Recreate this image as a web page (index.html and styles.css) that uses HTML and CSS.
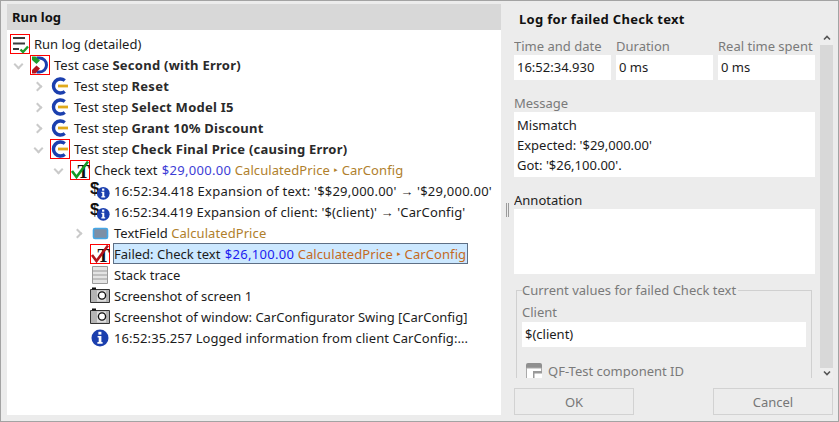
FILE: index.html
```html
<!DOCTYPE html>
<html lang="en">
<head>
<meta charset="utf-8">
<title>Run log</title>
<link rel="stylesheet" href="styles.css">
</head>
<body>
<svg class="defs" width="0" height="0" aria-hidden="true">
  <symbol id="i-step" viewBox="0 0 20 20">
    <path d="M14.800 4.500A7 7 0 1 0 14.800 15.500" fill="none" stroke="#1b3fae" stroke-width="3.400"/>
    <path d="M8 10h10" stroke="#e0aa1c" stroke-width="2.800"/>
  </symbol>
  <symbol id="i-info" viewBox="0 0 18 18">
    <circle cx="9" cy="9" r="8.500" fill="#1b3fae"/>
    <rect x="7.400" y="2.800" width="3" height="2.800" fill="#fff"/>
    <path d="M6.600 7h3.800v6h1.200v1.800H6.400V13h1.300V8.600H6.600z" fill="#fff"/>
  </symbol>
  <symbol id="i-cam" viewBox="0 0 20 20">
    <path d="M.5 3.500h19v13H.5z" fill="#b4b4b4" stroke="#333"/>
    <path d="M2 1.500h4v2H2z" fill="#111"/>
    <path d="M7 4.500h9v11H7z" fill="#ddd"/>
    <circle cx="12" cy="9.500" r="3.600" fill="#fff" stroke="#111" stroke-width="1.400"/>
  </symbol>
</svg>
<div class="window">
  <div class="main">
    <section class="left">
      <h2 class="left-head">Run log</h2>
      <div class="tree">
        <div class="row">
          <span class="icon mark"><svg width="18" height="18" viewBox="0 0 18 18"><path d="M2 3h12M2 8.500h12M2 14h6" stroke="#3b3b3b" stroke-width="2.200"/><path d="M9.500 14.500l2.500 2.500 5-5.500" fill="none" stroke="#1f9b2c" stroke-width="2.400"/></svg></span>
          <span class="label">Run log (detailed)</span>
        </div>
        <div class="row lv1">
          <span class="tw open"></span>
          <span class="icon mark"><svg width="18" height="18" viewBox="0 0 18 18"><path d="M5.500 2h3a7 7 0 0 1 0 14h-3" fill="none" stroke="#1b3fae" stroke-width="3"/><path d="M1 .5h3.500l4.500 4-3.500 3.500L1 4z" fill="#1f9b2c"/><path d="M1 17.500V14l4.500-4.500L9 12.500l-4.500 5z" fill="#b3141d"/></svg></span>
          <span class="label">Test case <b>Second (with Error)</b></span>
        </div>
        <div class="row lv2">
          <span class="tw"></span>
          <span class="icon"><svg width="20" height="20"><use href="#i-step"/></svg></span>
          <span class="label">Test step <b>Reset</b></span>
        </div>
        <div class="row lv2">
          <span class="tw"></span>
          <span class="icon"><svg width="20" height="20"><use href="#i-step"/></svg></span>
          <span class="label">Test step <b>Select Model I5</b></span>
        </div>
        <div class="row lv2">
          <span class="tw"></span>
          <span class="icon"><svg width="20" height="20"><use href="#i-step"/></svg></span>
          <span class="label">Test step <b>Grant 10% Discount</b></span>
        </div>
        <div class="row lv2">
          <span class="tw open"></span>
          <span class="icon mark"><svg width="18" height="18" viewBox="1 1 18 18"><use href="#i-step" width="20" height="20"/></svg></span>
          <span class="label">Test step <b>Check Final Price (causing Error)</b></span>
        </div>
        <div class="row lv3">
          <span class="tw open"></span>
          <span class="icon mark"><svg width="18" height="18" viewBox="0 0 18 18"><text x="6.500" y="16.500" class="svg-t">T</text><path d="M1 10l4.500 6L17 .5" fill="none" stroke="#139a25" stroke-width="2.600"/></svg></span>
          <span class="label">Check text <span class="val">$29,000.00</span> <span class="cmp">CalculatedPrice ‣ CarConfig</span></span>
        </div>
        <div class="row lv4">
          <span class="tw none"></span>
          <span class="icon"><svg width="20" height="20" viewBox="0 0 20 20"><text x="0" y="12.500" class="svg-dollar">$</text><use href="#i-info" x="6.500" y="5.500" width="13.500" height="13.500"/></svg></span>
          <span class="label ls-a">16:52:34.418 Expansion of text: '$$29,000.00' → '$29,000.00'</span>
        </div>
        <div class="row lv4">
          <span class="tw none"></span>
          <span class="icon"><svg width="20" height="20" viewBox="0 0 20 20"><text x="0" y="12.500" class="svg-dollar">$</text><use href="#i-info" x="6.500" y="5.500" width="13.500" height="13.500"/></svg></span>
          <span class="label ls-b">16:52:34.419 Expansion of client: '$(client)' → 'CarConfig'</span>
        </div>
        <div class="row lv4">
          <span class="tw"></span>
          <span class="icon"><svg width="20" height="20" viewBox="0 0 20 20"><rect x="3.500" y="5.500" width="14" height="10" rx="1.500" fill="#7d8fa6" stroke="#45a7e6" stroke-width="1.600"/></svg></span>
          <span class="label">TextField <span class="cmp">CalculatedPrice</span></span>
        </div>
        <div class="row lv4">
          <span class="tw none"></span>
          <span class="icon mark"><svg width="18" height="18" viewBox="0 0 18 18"><text x="6.500" y="16.500" class="svg-t">T</text><path d="M1 10l4.500 6L17 .5" fill="none" stroke="#b3141d" stroke-width="2.600"/></svg></span>
          <span class="label sel">Failed: Check text <span class="val">$26,100.00</span> <span class="cmp">CalculatedPrice ‣ CarConfig</span></span>
        </div>
        <div class="row lv4">
          <span class="tw none"></span>
          <span class="icon"><svg width="20" height="20" viewBox="0 0 20 20"><path d="M2.500 1.500h15v17h-15z" fill="#e4e4e4" stroke="#9a9a9a"/><path d="M2.500 6h15M2.500 10h15M2.500 14h15" stroke="#9a9a9a"/></svg></span>
          <span class="label">Stack trace</span>
        </div>
        <div class="row lv4">
          <span class="tw none"></span>
          <span class="icon"><svg width="20" height="20"><use href="#i-cam"/></svg></span>
          <span class="label">Screenshot of screen 1</span>
        </div>
        <div class="row lv4">
          <span class="tw none"></span>
          <span class="icon"><svg width="20" height="20"><use href="#i-cam"/></svg></span>
          <span class="label">Screenshot of window: CarConfigurator Swing [CarConfig]</span>
        </div>
        <div class="row lv4">
          <span class="tw none"></span>
          <span class="icon"><svg width="20" height="20" viewBox="-1 -1 20 20"><use href="#i-info" width="18" height="18"/></svg></span>
          <span class="label ls-c">16:52:35.257 Logged information from client CarConfig:...</span>
        </div>
      </div>
    </section>
    <div class="splitter"><span class="grip"></span></div>
    <section class="right">
      <h2 class="right-head">Log for failed Check text</h2>
      <div class="scroller">
        <div class="form">
          <div class="trio">
            <div class="cell"><div class="cap">Time and date</div><div class="box one">16:52:34.930</div></div>
            <div class="cell"><div class="cap">Duration</div><div class="box one">0 ms</div></div>
            <div class="cell"><div class="cap">Real time spent</div><div class="box one">0 ms</div></div>
          </div>
          <div class="cap msg-cap">Message</div>
          <div class="box message">Mismatch<br>Expected: '$29,000.00'<br>Got: '$26,100.00'.</div>
          <div class="cap dark ann-cap">Annotation</div>
          <div class="box annotation"></div>
          <fieldset class="group">
            <legend>Current values for failed Check text</legend>
            <div class="cap client-cap">Client</div>
            <div class="box one client">$(client)</div>
            <div class="comp-id">
              <svg width="18" height="18" viewBox="0 0 18 18"><path d="M1 3a2 2 0 0 1 2-2h12a2 2 0 0 1 2 2v3H1z" fill="#8f8f8f"/><path d="M1.500 6h15v11h-15z" fill="#fff" stroke="#aaa"/><path d="M8 9h9v8H8z" fill="#9a9a9a"/><path d="M9.500 11.500h7.500V17H9.500z" fill="#fff"/></svg>
              <span class="comp-text">QF-Test component ID</span>
            </div>
          </fieldset>
        </div>
        <div class="vbar">
          <span class="arrow"><svg width="8" height="6" viewBox="0 0 8 6"><path d="M1 4.500l3-3 3 3" fill="none" stroke="#555" stroke-width="1.600"/></svg></span>
          <span class="track"></span>
          <span class="arrow low"><svg width="8" height="6" viewBox="0 0 8 6"><path d="M1 1.500l3 3 3-3" fill="none" stroke="#555" stroke-width="1.600"/></svg></span>
        </div>
      </div>
      <div class="buttons">
        <button class="btn" type="button">OK</button>
        <button class="btn" type="button">Cancel</button>
      </div>
    </section>
  </div>
</div>
</body>
</html>
```
FILE: styles.css
```css
* { box-sizing: border-box; }
html, body { margin: 0; padding: 0; }
body {
  width: 839px;
  height: 422px;
  overflow: hidden;
  font-family: "Noto Sans", "Open Sans", sans-serif;
  font-size: 13px;
  color: #1c1c1c;
  background: #ececec;
}
.defs { position: absolute; }
svg { overflow: visible; }
.svg-dollar { font: bold 17px "Liberation Sans", sans-serif; fill: #111; }
.svg-t { font: bold 18px "Liberation Serif", serif; fill: #111; }

.window {
  width: 839px;
  height: 422px;
  border: 1px solid #a3a3a3;
  padding: 3px 0 6px 6px;
}
.main { display: flex; height: 100%; }

.left {
  width: 494px;
  display: flex;
  flex-direction: column;
  background: #fff;
}
.left-head {
  margin: 0;
  height: 26px;
  flex: none;
  padding-left: 5px;
  background: #d8d8d8;
  color: #111;
  font-size: 13px;
  font-weight: 700;
  line-height: 26px;
}
.tree { flex: 1; padding: 3px 0 0 3px; }
.row { display: flex; align-items: center; height: 21px; white-space: nowrap; }
.lv1 { padding-left: 0; }
.lv2 { padding-left: 20px; }
.lv3 { padding-left: 40px; }
.lv4 { padding-left: 60px; }
.tw { width: 20px; height: 20px; flex: none; position: relative; }
.tw::before {
  content: "";
  position: absolute;
  left: 4px;
  top: 7.500px;
  width: 5px;
  height: 5px;
  border-top: 2px solid #cacaca;
  border-right: 2px solid #cacaca;
  transform: rotate(45deg);
}
.tw.open::before { left: 5px; top: 6px; transform: rotate(135deg); }
.tw.none::before { display: none; }
.icon {
  width: 20px;
  height: 20px;
  flex: none;
  display: flex;
  align-items: center;
  justify-content: center;
}
.icon.mark { border: 1px solid #f00; }
.icon svg { display: block; }
.label { margin-left: 4px; height: 21px; padding-top: 1px; line-height: 20px; }
.label b { font-weight: 700; color: #2a2a2a; letter-spacing: .25px; }
.ls-a { letter-spacing: .22px; }
.ls-b { letter-spacing: .14px; }
.ls-c { letter-spacing: .07px; }
.val { color: #3d3dd6; letter-spacing: .3px; margin-left: 1px; }
.cmp { color: #b0802c; letter-spacing: .08px; }
.sel { background: #cce8ff; border: 1px solid #5e6f85; margin-left: 3px; padding: 0 1px 0 0; }
.sel .val { color: #1c1cf0; }
.sel .cmp { color: #c46a1e; }

.splitter { width: 13px; flex: none; display: flex; justify-content: center; padding-top: 199px; }
.grip { width: 3px; height: 14px; border-left: 1px solid #9a9a9a; border-right: 1px solid #9a9a9a; }

.right { width: 324px; flex: none; display: flex; flex-direction: column; }
.right-head { margin: 0; height: 26px; flex: none; padding-left: 5px; color: #111; font-size: 13px; font-weight: 700; line-height: 30px; letter-spacing: .3px; }
.scroller { display: flex; height: 348px; flex: none; overflow: hidden; }
.form { width: 306px; flex: none; overflow: hidden; }
.trio { display: flex; gap: 5px; }
.cell { width: 97px; }
.cap { color: #7a7a7a; line-height: 21px; height: 19px; margin-top: 6px; }
.cap.dark { color: #222; }
.box { background: #fff; padding: 0 3px; color: #1c1c1c; line-height: 20px; }
.one { height: 25px; line-height: 25px; }
.msg-cap { margin-top: 13px; height: 19px; }
.message { width: 301px; height: 65px; padding-top: 3px; }
.ann-cap { margin-top: 13px; height: 19px; }
.annotation { width: 301px; height: 65px; }
.group {
  width: 296px;
  margin: 8px 0 0 2px;
  padding: 0 5px;
  height: 110px;
  border: 1px solid #d0d0d0;
  border-bottom: none;
  min-width: 0;
}
.group legend { padding: 0 2px 0 0; margin-left: 0; color: #7a7a7a; line-height: 17px; }
.client-cap { margin-top: 4px; line-height: 19px; }
.comp-id { display: flex; align-items: center; gap: 5px; height: 18px; margin: 15px 0 0 3px; color: #7a7a7a; }
.comp-text { line-height: 14px; }

.vbar { width: 13px; flex: none; display: flex; flex-direction: column; }
.arrow { height: 15px; flex: none; display: flex; align-items: center; justify-content: center; background: #eee; }
.arrow.low { height: 10px; }
.track { flex: 1; background: #d8d8d8; }

.buttons { display: flex; justify-content: space-between; width: 319px; margin-top: 10px; }
.btn {
  width: 120px;
  height: 27px;
  padding: 0;
  background: #ececec;
  border: 1px solid #d2d2d2;
  color: #777;
  font: inherit;
}
```
